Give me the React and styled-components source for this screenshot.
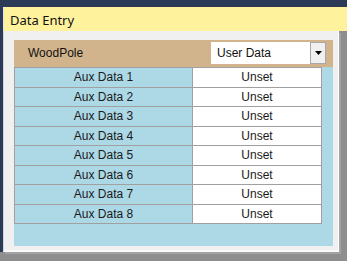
import React from "react";
import styled, { createGlobalStyle } from "styled-components";

const Global = createGlobalStyle`
  html, body { margin: 0; padding: 0; background: #8c8c8c; }
  body { width: 347px; height: 261px; overflow: hidden; }
`;

const Page = styled.div`
  width: 347px;
  height: 261px;
  background: #8e8e8e;
  display: flex;
  flex-direction: column;
`;

const TopBand = styled.div`
  height: 7px;
  background: #2b3a57;
  flex: none;
`;

const Main = styled.div`
  display: flex;
  height: 245px;
  flex: none;
`;

const NavyStrip = styled.div`
  width: 3px;
  background: #2b3a57;
  flex: none;
`;

const WindowCol = styled.div`
  flex: 1;
  display: flex;
  flex-direction: column;
  min-width: 0;
`;

const TitleBar = styled.div`
  height: 24px;
  background: #fff29d;
  border-left: 1px solid #e6e6e6;
  padding-left: 6px;
  display: flex;
  align-items: center;
  font-family: "Noto Sans", "Liberation Sans", sans-serif;
  font-size: 13px;
  color: #111;
  padding-top: 1px;
  box-sizing: border-box;
`;

const Content = styled.div`
  width: 336px;
  height: 221px;
  box-sizing: border-box;
  background: #f0f0f0;
  border-left: 1px solid #d4d4d4;
  border-right: 1px solid #ffffff;
  border-bottom: 2px solid #fafafa;
  box-shadow: 2px 2px 0 #a3a3a3;
  padding: 9px 5px 4px 10px;
  display: flex;
`;

const Panel = styled.div`
  flex: 1;
  background: #add8e6;
  display: flex;
  flex-direction: column;
`;

const Header = styled.div`
  height: 27px;
  background: #d2b48c;
  display: flex;
  align-items: flex-start;
  justify-content: space-between;
  padding: 2px 7px 0 14px;
  box-sizing: border-box;
`;

const HeaderLabel = styled.span`
  font-family: "Liberation Sans", Arial, sans-serif;
  font-size: 12px;
  color: #111;
  line-height: 23px;
`;

const Combo = styled.div`
  width: 115px;
  height: 22px;
  background: #fff;
  display: flex;
  align-items: stretch;
  box-sizing: border-box;
`;

const ComboText = styled.span`
  flex: 1;
  padding-left: 6px;
  font-family: "Liberation Sans", Arial, sans-serif;
  font-size: 12px;
  line-height: 22px;
  color: #111;
`;

const ComboButton = styled.div`
  width: 16px;
  box-sizing: border-box;
  border: 1px solid #a8a8a8;
  background: #f0f0f0;
  display: flex;
  align-items: center;
  justify-content: center;
`;

const Grid = styled.div`
  width: 308px;
  box-sizing: border-box;
  display: grid;
  grid-template-columns: 177px 128px;
  grid-auto-rows: 18.5px;
  gap: 1px;
  padding: 1px;
  background: #a0a0a0;
`;

const Cell = styled.div`
  background: ${(p) => (p.$value ? "#ffffff" : "#add8e6")};
  display: flex;
  align-items: center;
  justify-content: center;
  font-family: "Liberation Sans", Arial, sans-serif;
  font-size: 12px;
  color: #1a1a1a;
`;

const rows = [1, 2, 3, 4, 5, 6, 7, 8];

export default function App() {
  return (
    <>
      <Global />
      <Page>
        <TopBand />
        <Main>
          <NavyStrip />
          <WindowCol>
            <TitleBar>Data Entry</TitleBar>
            <Content>
              <Panel>
                <Header>
                  <HeaderLabel>WoodPole</HeaderLabel>
                  <Combo>
                    <ComboText>User Data</ComboText>
                    <ComboButton>
                      <svg width="7" height="4" viewBox="0 0 7 4">
                        <path d="M0 0 H7 L3.5 4 Z" fill="#000" />
                      </svg>
                    </ComboButton>
                  </Combo>
                </Header>
                <Grid>
                  {rows.map((n) => (
                    <React.Fragment key={n}>
                      <Cell>Aux Data {n}</Cell>
                      <Cell $value>Unset</Cell>
                    </React.Fragment>
                  ))}
                </Grid>
              </Panel>
            </Content>
          </WindowCol>
        </Main>
      </Page>
    </>
  );
}
